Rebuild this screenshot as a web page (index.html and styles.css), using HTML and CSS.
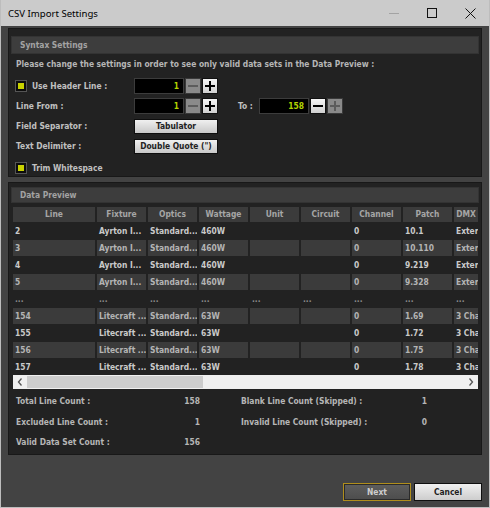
FILE: index.html
```html
<!DOCTYPE html>
<html>
<head>
<meta charset="utf-8">
<title>CSV Import Settings</title>
<link rel="stylesheet" href="styles.css">
</head>
<body>
<div class="window">
  <div class="titlebar">
    <span class="title">CSV Import Settings</span>
    <div class="wctrls">
      <span class="wbtn"><svg width="10" height="10" viewBox="0 0 10 10"><path d="M0 5.5h10" stroke="#a3a3a3" stroke-width="1"/></svg></span>
      <span class="wbtn"><svg width="10" height="10" viewBox="0 0 10 10"><rect x="0.5" y="0.5" width="9" height="9" fill="none" stroke="#111" stroke-width="1"/></svg></span>
      <span class="wbtn"><svg width="11" height="11" viewBox="0 0 11 11"><path d="M0.5 0.5l10 10M10.5 0.5l-10 10" stroke="#111" stroke-width="1"/></svg></span>
    </div>
  </div>
  <div class="main">
    <section class="panel syntax">
      <div class="phead">Syntax Settings</div>
      <div class="pbody">
        <p class="hint">Please change the settings in order to see only valid data sets in the Data Preview :</p>
        <div class="row">
          <div class="lbl"><span class="chk"></span>Use Header Line :</div>
          <div class="num">1</div>
          <span class="spin off"><svg width="12" height="12" viewBox="0 0 12 12"><path d="M1 6h10" stroke="currentColor" stroke-width="2"/></svg></span>
          <span class="spin"><svg width="12" height="12" viewBox="0 0 12 12"><path d="M1 6h10M6 1v10" stroke="currentColor" stroke-width="2"/></svg></span>
        </div>
        <div class="row">
          <div class="lbl">Line From :</div>
          <div class="num">1</div>
          <span class="spin off"><svg width="12" height="12" viewBox="0 0 12 12"><path d="M1 6h10" stroke="currentColor" stroke-width="2"/></svg></span>
          <span class="spin"><svg width="12" height="12" viewBox="0 0 12 12"><path d="M1 6h10M6 1v10" stroke="currentColor" stroke-width="2"/></svg></span>
          <div class="to">To :</div>
          <div class="num">158</div>
          <span class="spin"><svg width="12" height="12" viewBox="0 0 12 12"><path d="M1 6h10" stroke="currentColor" stroke-width="2"/></svg></span>
          <span class="spin off"><svg width="12" height="12" viewBox="0 0 12 12"><path d="M1 6h10M6 1v10" stroke="currentColor" stroke-width="2"/></svg></span>
        </div>
        <div class="row">
          <div class="lbl">Field Separator :</div>
          <div class="btn">Tabulator</div>
        </div>
        <div class="row">
          <div class="lbl">Text Delimiter :</div>
          <div class="btn">Double Quote (")</div>
        </div>
        <div class="row last">
          <div class="lbl"><span class="chk"></span>Trim Whitespace</div>
        </div>
      </div>
    </section>

    <section class="panel preview">
      <div class="phead">Data Preview</div>
      <div class="table">
        <div class="tr head"><span>Line</span><span>Fixture</span><span>Optics</span><span>Wattage</span><span>Unit</span><span>Circuit</span><span>Channel</span><span>Patch</span><span>DMX</span></div>
        <div class="tr"><span>2</span><span>Ayrton I...</span><span>Standard...</span><span>460W</span><span></span><span></span><span>0</span><span>10.1</span><span>Exter</span></div>
        <div class="tr alt"><span>3</span><span>Ayrton I...</span><span>Standard...</span><span>460W</span><span></span><span></span><span>0</span><span>10.110</span><span>Exter</span></div>
        <div class="tr"><span>4</span><span>Ayrton I...</span><span>Standard...</span><span>460W</span><span></span><span></span><span>0</span><span>9.219</span><span>Exter</span></div>
        <div class="tr alt"><span>5</span><span>Ayrton I...</span><span>Standard...</span><span>460W</span><span></span><span></span><span>0</span><span>9.328</span><span>Exter</span></div>
        <div class="tr dots"><span>...</span><span>...</span><span>...</span><span>...</span><span>...</span><span>...</span><span>...</span><span>...</span><span>...</span></div>
        <div class="tr alt"><span>154</span><span>Litecraft ...</span><span>Standard...</span><span>63W</span><span></span><span></span><span>0</span><span>1.69</span><span>3 Cha</span></div>
        <div class="tr"><span>155</span><span>Litecraft ...</span><span>Standard...</span><span>63W</span><span></span><span></span><span>0</span><span>1.72</span><span>3 Cha</span></div>
        <div class="tr alt"><span>156</span><span>Litecraft ...</span><span>Standard...</span><span>63W</span><span></span><span></span><span>0</span><span>1.75</span><span>3 Cha</span></div>
        <div class="tr"><span>157</span><span>Litecraft ...</span><span>Standard...</span><span>63W</span><span></span><span></span><span>0</span><span>1.78</span><span>3 Cha</span></div>
      </div>
      <div class="hscroll">
        <span class="arr"><svg width="6" height="8" viewBox="0 0 6 8"><path d="M4.5 0.5L1.5 4l3 3.5" fill="none" stroke="#555" stroke-width="1.3"/></svg></span>
        <span class="thumb"></span>
        <span class="arr right"><svg width="6" height="8" viewBox="0 0 6 8"><path d="M1.5 0.5L4.5 4l-3 3.5" fill="none" stroke="#555" stroke-width="1.3"/></svg></span>
      </div>
      <div class="stats">
        <span>Total Line Count :</span><span class="v">158</span><span></span><span>Blank Line Count (Skipped) :</span><span class="v">1</span>
        <span>Excluded Line Count :</span><span class="v">1</span><span></span><span>Invalid Line Count (Skipped) :</span><span class="v">0</span>
        <span>Valid Data Set Count :</span><span class="v">156</span>
      </div>
    </section>

    <div class="footer">
      <div class="fbtn next">Next</div>
      <div class="fbtn cancel">Cancel</div>
    </div>
  </div>
</div>
</body>
</html>
```

FILE: styles.css
```css
* { box-sizing: border-box; margin: 0; padding: 0; }
html, body { width: 490px; height: 508px; overflow: hidden; background: #434343; }
body {
  font-family: "DejaVu Sans Condensed", "DejaVu Sans", sans-serif;
  font-size: 8.4px;
  font-weight: bold;
  color: #bcbcbc;
}
.window {
  width: 490px; height: 508px;
  display: flex; flex-direction: column;
  border: 1px solid #bdbdbd; border-top: none;
  background: #434343;
}
.titlebar {
  height: 26px; flex: none;
  display: flex; align-items: center;
  background: #cbcbcb;
}
.title {
  padding-left: 7px;
  font-family: "Noto Sans", "Liberation Sans", sans-serif;
  font-size: 9.6px; font-weight: normal; color: #000;
}
.wctrls { margin-left: auto; display: flex; }
.wbtn { width: 38px; height: 26px; display: flex; align-items: center; justify-content: center; }

.main { flex: 1; display: flex; flex-direction: column; padding: 2px 7px 6px 7px; }

.panel { background: #222; border: 1px solid #181818; padding: 7px 2px 0 2px; }
.phead {
  height: 18px; line-height: 16px;
  background: #3d3d3d; border: 1px solid #333;
  padding-left: 8px; color: #a3a3a3;
}
.pbody { padding-left: 5px; }
.hint { margin-top: 2px; line-height: 16px; margin-bottom: 4px; color: #b6b6b6; }
.row { display: flex; align-items: center; height: 20px; }
.row.last { height: 17px; margin-top: 3px; }
.lbl { width: 118px; display: flex; align-items: center; color: #c0c0c0; white-space: nowrap; }
.chk {
  width: 10px; height: 10px; flex: none;
  border: 2px solid #0d0d0d; background: #c9d200;
  box-shadow: 0 0 0 1px #555;
  margin-right: 6px;
}
.num {
  width: 50px; height: 16px;
  background: #000; border: 1px solid #3c3c3c;
  color: #b3d400; text-align: right;
  padding-right: 4px; line-height: 14px;
}
.spin {
  width: 16px; height: 16px; margin-left: 1px;
  border: 1px solid #111;
  background: linear-gradient(#f6f6f6, #d0d0d0);
  color: #000;
  display: flex; align-items: center; justify-content: center;
}
.spin.off { background: #8a8a8a; border-color: #3a3a3a; color: #5c5c5c; }
.to { width: 21px; margin-left: 20px; color: #c0c0c0; }
.btn {
  width: 84px; height: 15px; line-height: 13px;
  border: 1px solid #0e0e0e;
  background: linear-gradient(#f0f0f0, #c8c8c8);
  color: #222; text-align: center; white-space: nowrap;
}

.preview { margin-top: 5px; padding-top: 4px; padding-bottom: 1.5px; }
.preview .phead { height: 16px; line-height: 14px; }

.table {
  margin: 4px 0 0 2px; width: 465px;
  overflow: hidden;
  display: flex; flex-direction: column; gap: 1px;
}
.tr {
  display: grid;
  grid-template-columns: 82px repeat(7, 49px) 24px;
  column-gap: 2px;
  height: 16px; line-height: 16px; flex: none;
}
.tr span { padding-left: 2px; white-space: nowrap; overflow: hidden; color: #cacaca; }
.tr.head { height: 15px; line-height: 15px; }
.tr.head span { background: #3b3b3b; text-align: center; color: #a6a6a6; padding-left: 0; }
.tr.alt span { background: #3b3b3b; color: #b4b4b4; }
.tr.dots span { color: #8a8a8a; }

.hscroll {
  margin-left: 2px; width: 465px; height: 14px;
  background: #f0f0f0;
  display: flex; align-items: center;
}
.arr { width: 14px; height: 14px; display: flex; align-items: center; justify-content: center; }
.arr.right { margin-left: auto; }
.thumb { width: 176px; height: 12px; background: #cdcdcd; }

.stats {
  display: grid;
  grid-template-columns: 150px 34px 41px 150px 36px;
  grid-auto-rows: 20.5px;
  align-items: center;
  padding: 2px 0 0 5px;
  color: #b6b6b6;
  white-space: nowrap;
}
.v { text-align: right; }

.footer { margin-top: auto; display: flex; justify-content: flex-end; gap: 3px; }
.fbtn { width: 68px; height: 18px; line-height: 16px; text-align: center; }
.next {
  border: 1px solid #b08e1c;
  background: linear-gradient(#5e5e5e, #4c4c4c);
  box-shadow: inset 0 0 0 1px #2a2a2a;
  color: #cdcdcd;
}
.cancel {
  border: 1px solid #0f0f0f;
  background: linear-gradient(#f0f0f0, #cdcdcd);
  color: #1e1e1e;
}
```
